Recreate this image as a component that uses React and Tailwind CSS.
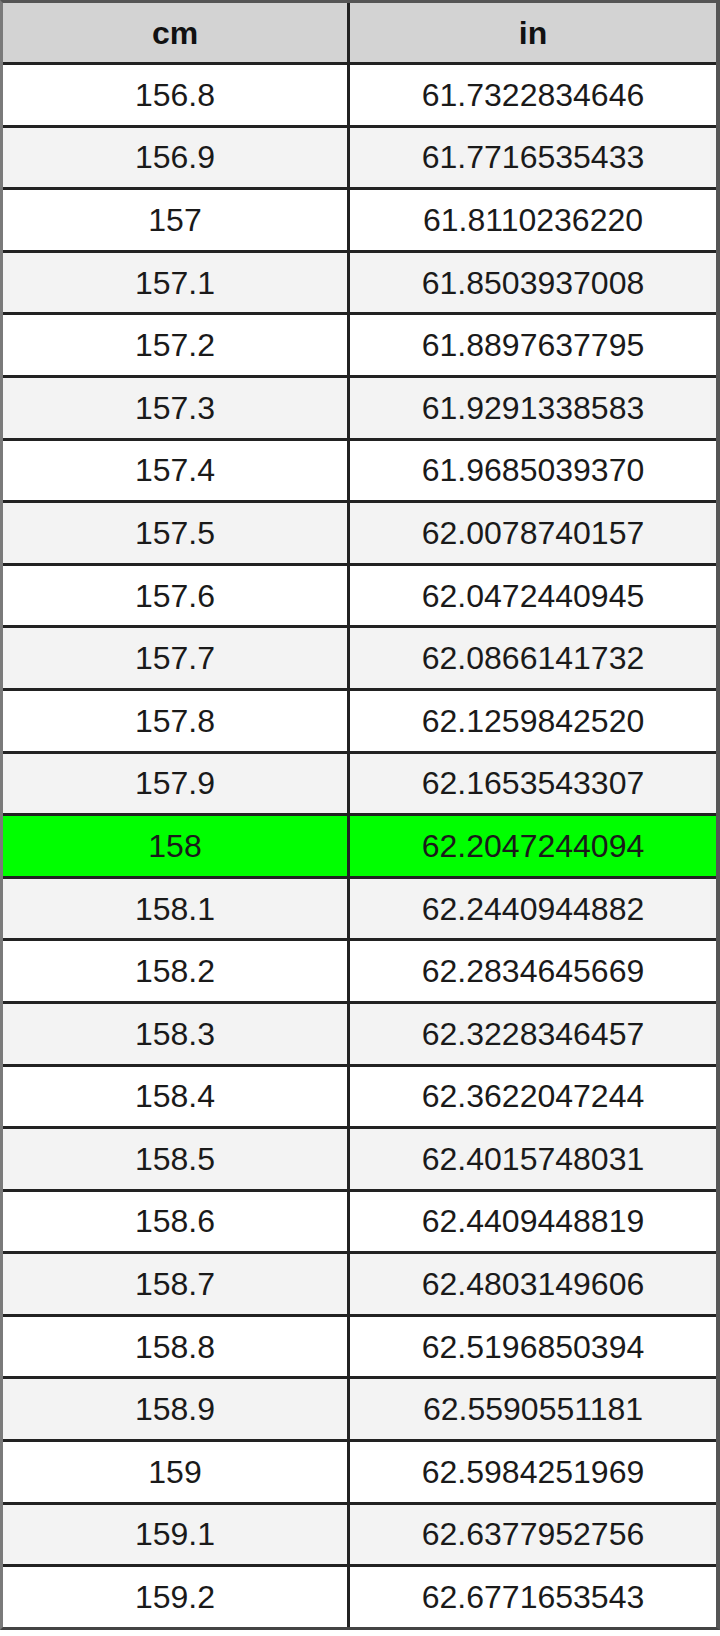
import React from 'react';

export default function App() {
    // cm -> in conversion rows
    const rows = [
        ['156.8', '61.7322834646'],
        ['156.9', '61.7716535433'],
        ['157', '61.8110236220'],
        ['157.1', '61.8503937008'],
        ['157.2', '61.8897637795'],
        ['157.3', '61.9291338583'],
        ['157.4', '61.9685039370'],
        ['157.5', '62.0078740157'],
        ['157.6', '62.0472440945'],
        ['157.7', '62.0866141732'],
        ['157.8', '62.1259842520'],
        ['157.9', '62.1653543307'],
        ['158', '62.2047244094'],
        ['158.1', '62.2440944882'],
        ['158.2', '62.2834645669'],
        ['158.3', '62.3228346457'],
        ['158.4', '62.3622047244'],
        ['158.5', '62.4015748031'],
        ['158.6', '62.4409448819'],
        ['158.7', '62.4803149606'],
        ['158.8', '62.5196850394'],
        ['158.9', '62.5590551181'],
        ['159', '62.5984251969'],
        ['159.1', '62.6377952756'],
        ['159.2', '62.6771653543'],
    ];

    return (
        <div className="w-[720px] h-[1636px] bg-white font-['Liberation_Sans',Arial,sans-serif] text-[32px] text-[#1a1a1a]">
            <div className="w-[720px] border-t-[3px] border-b-[3px] border-l-[3px] border-r-[4px] border-t-[#555] border-b-[#444] border-l-[#7a7a7a] border-r-[#555]">

                {/* Header */}
                <div className="flex h-[59px] bg-[#d3d3d3] font-bold text-[#111]">
                    <div className="w-[347px] flex items-center justify-center border-r-[3px] border-[#222]">cm</div>
                    <div className="flex-1 flex items-center justify-center">in</div>
                </div>

                {/* Rows */}
                {rows.map(([cm, inch], i) => {
                    let bg = i % 2 === 0 ? 'bg-white' : 'bg-[#f3f3f3]';
                    if (cm === '158') bg = 'bg-[#00ff00]';
                    return (
                        <div key={cm} className={`flex h-[62.6px] border-t-[3px] border-[#222] ${bg}`}>
                            <div className="w-[347px] flex items-center justify-center border-r-[3px] border-[#222]">{cm}</div>
                            <div className="flex-1 flex items-center justify-center">{inch}</div>
                        </div>
                    );
                })}
            </div>
        </div>
    );
}
